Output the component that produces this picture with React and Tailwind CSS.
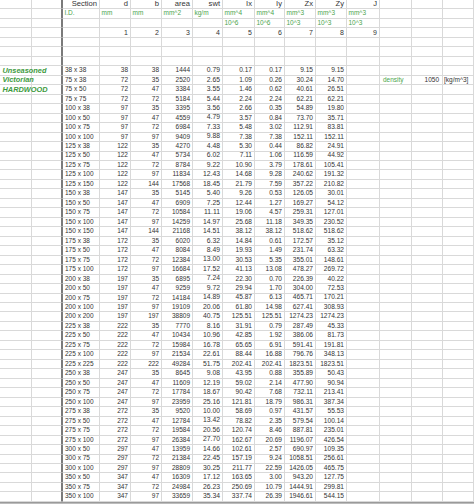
import React from "react";

const rows = [
  ["38 x 38", "38", "38", "1444", "0.79", "0.17", "0.17", "9.15", "9.15"],
  ["75 x 38", "72", "35", "2520", "2.65", "1.09", "0.26", "30.24", "14.70"],
  ["75 x 50", "72", "47", "3384", "3.55", "1.46", "0.62", "40.61", "26.51"],
  ["75 x 75", "72", "72", "5184", "5.44", "2.24", "2.24", "62.21", "62.21"],
  ["100 x 38", "97", "35", "3395", "3.56", "2.66", "0.35", "54.89", "19.80"],
  ["100 x 50", "97", "47", "4559", "4.79", "3.57", "0.84", "73.70", "35.71"],
  ["100 x 75", "97", "72", "6984", "7.33", "5.48", "3.02", "112.91", "83.81"],
  ["100 x 100", "97", "97", "9409", "9.88", "7.38", "7.38", "152.11", "152.11"],
  ["125 x 38", "122", "35", "4270", "4.48", "5.30", "0.44", "86.82", "24.91"],
  ["125 x 50", "122", "47", "5734", "6.02", "7.11", "1.06", "116.59", "44.92"],
  ["125 x 75", "122", "72", "8784", "9.22", "10.90", "3.79", "178.61", "105.41"],
  ["125 x 100", "122", "97", "11834", "12.43", "14.68", "9.28", "240.62", "191.32"],
  ["125 x 150", "122", "144", "17568", "18.45", "21.79", "7.59", "357.22", "210.82"],
  ["150 x 38", "147", "35", "5145", "5.40", "9.26", "0.53", "126.05", "30.01"],
  ["150 x 50", "147", "47", "6909", "7.25", "12.44", "1.27", "169.27", "54.12"],
  ["150 x 75", "147", "72", "10584", "11.11", "19.06", "4.57", "259.31", "127.01"],
  ["150 x 100", "147", "97", "14259", "14.97", "25.68", "11.18", "349.35", "230.52"],
  ["150 x 150", "147", "144", "21168", "14.51", "38.12", "38.12", "518.62", "518.62"],
  ["175 x 38", "172", "35", "6020", "6.32", "14.84", "0.61", "172.57", "35.12"],
  ["175 x 50", "172", "47", "8084", "8.49", "19.93", "1.49", "231.74", "63.32"],
  ["175 x 75", "172", "72", "12384", "13.00", "30.53", "5.35", "355.01", "148.61"],
  ["175 x 100", "172", "97", "16684", "17.52", "41.13", "13.08", "478.27", "269.72"],
  ["200 x 38", "197", "35", "6895", "7.24", "22.30", "0.70", "226.39", "40.22"],
  ["200 x 50", "197", "47", "9259", "9.72", "29.94", "1.70", "304.00", "72.53"],
  ["200 x 75", "197", "72", "14184", "14.89", "45.87", "6.13", "465.71", "170.21"],
  ["200 x 100", "197", "97", "19109", "20.06", "61.80", "14.98", "627.41", "308.93"],
  ["200 x 200", "197", "197", "38809", "40.75", "125.51", "125.51", "1274.23", "1274.23"],
  ["225 x 38", "222", "35", "7770", "8.16", "31.91", "0.79", "287.49", "45.33"],
  ["225 x 50", "222", "47", "10434", "10.96", "42.85", "1.92", "386.06", "81.73"],
  ["225 x 75", "222", "72", "15984", "16.78", "65.65", "6.91", "591.41", "191.81"],
  ["225 x 100", "222", "97", "21534", "22.61", "88.44", "16.88", "796.76", "348.13"],
  ["225 x 225", "222", "222", "49284", "51.75", "202.41", "202.41", "1823.51", "1823.51"],
  ["250 x 38", "247", "35", "8645", "9.08", "43.95", "0.88", "355.89", "50.43"],
  ["250 x 50", "247", "47", "11609", "12.19", "59.02", "2.14", "477.90", "90.94"],
  ["250 x 75", "247", "72", "17784", "18.67", "90.42", "7.68", "732.11", "213.41"],
  ["250 x 100", "247", "97", "23959", "25.16", "121.81", "18.79", "986.31", "387.34"],
  ["275 x 38", "272", "35", "9520", "10.00", "58.69", "0.97", "431.57", "55.53"],
  ["275 x 50", "272", "47", "12784", "13.42", "78.82", "2.35", "579.54", "100.14"],
  ["275 x 75", "272", "72", "19584", "20.56", "120.74", "8.46", "887.81", "235.01"],
  ["275 x 100", "272", "97", "26384", "27.70", "162.67", "20.69", "1196.07", "426.54"],
  ["300 x 50", "297", "47", "13959", "14.66", "102.61", "2.57", "690.97", "109.35"],
  ["300 x 75", "297", "72", "21384", "22.45", "157.19", "9.24", "1058.51", "256.61"],
  ["300 x 100", "297", "97", "28809", "30.25", "211.77", "22.59", "1426.05", "465.75"],
  ["350 x 50", "347", "47", "16309", "17.12", "163.65", "3.00", "943.20", "127.75"],
  ["350 x 75", "347", "72", "24984", "26.23", "250.69", "10.79", "1444.91", "299.81"],
  ["350 x 100", "347", "97", "33659", "35.34", "337.74", "26.39", "1946.61", "544.15"],
];

const heads = ["Section", "d", "b", "area", "swt", "Ix", "Iy", "Zx", "Zy", "J"];
const units = ["I.D.", "mm", "mm", "mm^2", "kg/m", "mm^4", "mm^4", "mm^3", "mm^3", "mm^3"];
const powers = ["", "", "", "", "", "10^6", "10^6", "10^3", "10^3", "10^3"];
const labels = ["Unseasoned", "Victorian", "HARDWOOD"];

// font size per data column (section .. Zy)
const dataStyle = [
  "justify-start pl-[2px] text-[length:6.5px]",
  "justify-end pr-[2px] text-[length:6.5px]",
  "justify-end pr-[2px] text-[length:6.5px]",
  "justify-end pr-[2px] text-[length:6.5px]",
  "justify-end pr-[2px] text-[length:6.8px]",
  "justify-end pr-[2px] text-[length:6.6px]",
  "justify-end pr-[2px] text-[length:6.6px]",
  "justify-end pr-[2px] text-[length:6.6px]",
  "justify-end pr-[2px] text-[length:6.6px]",
];

const HEAD = "justify-end pr-[2px] text-[length:7.6px] text-[#333]";
const UNIT = "justify-start pl-[1.5px] text-[length:6.5px] text-[#4ca54c]";
const NUM = "justify-end pr-[2px] text-[length:7px] text-[#333]";

const cellFor = (r, c) => {
  // c: 0..14 -> columns A..O
  const k = c - 2;
  if (r === 0 && k >= 0 && k < 10) return [heads[k], HEAD];
  if (r === 1 && k >= 0 && k < 10) return [units[k], UNIT];
  if (r === 2 && k >= 0 && k < 10) return [powers[k], UNIT];
  if (r === 3 && k >= 1 && k < 10) return [String(k), NUM];
  if (r >= 7) {
    const d = rows[r - 7];
    if (c === 0 && r - 7 < 3)
      return [
        labels[r - 7],
        "justify-start pl-[2.5px] text-[length:7.4px] font-bold italic text-[#3d9a3d]",
      ];
    if (d && k >= 0 && k < 9) return [d[k], dataStyle[k] + " text-[#333]"];
    if (r === 8 && c === 12)
      return ["density", "justify-start pl-[3px] text-[length:6.5px] text-[#4ca54c]"];
    if (r === 8 && c === 13)
      return ["1050", "justify-end pr-[3px] text-[length:6.5px] text-[#333]"];
    if (r === 8 && c === 14)
      return ["[kg/m^3]", "justify-start pl-[1px] text-[length:6.5px] text-[#333]"];
  }
  return ["", ""];
};

const App = () => {
  const total = 53;
  const CellStyle =
    "flex items-center overflow-visible whitespace-nowrap leading-none border-b border-r border-[#d9d9d9]";

  return (
    <div className="w-[474px] h-[504px] overflow-hidden bg-white font-['Liberation_Sans',Arial,sans-serif]">
      <div className="grid grid-cols-[32px_30px_38px_31px_31px_31px_30px_32px_30px_31px_31px_33px_32px_31px_31px] auto-rows-[9.47px]">
        {Array.from({ length: total }).map((_, r) =>
          Array.from({ length: 15 }).map((__, c) => {
            const [text, cls] = cellFor(r, c);
            let edge = "";
            if (c === 1) edge = " border-r-[#7a7a7a]";
            if (c === 2) edge = " border-l border-l-[#7a7a7a]";
            return (
              <div key={r + "-" + c} className={CellStyle + edge + " " + cls}>
                {text}
              </div>
            );
          })
        )}
      </div>
      <div className="h-[3px] bg-[#bcbcbc] border-t border-[#9a9a9a]" />
    </div>
  );
};

export default App;
